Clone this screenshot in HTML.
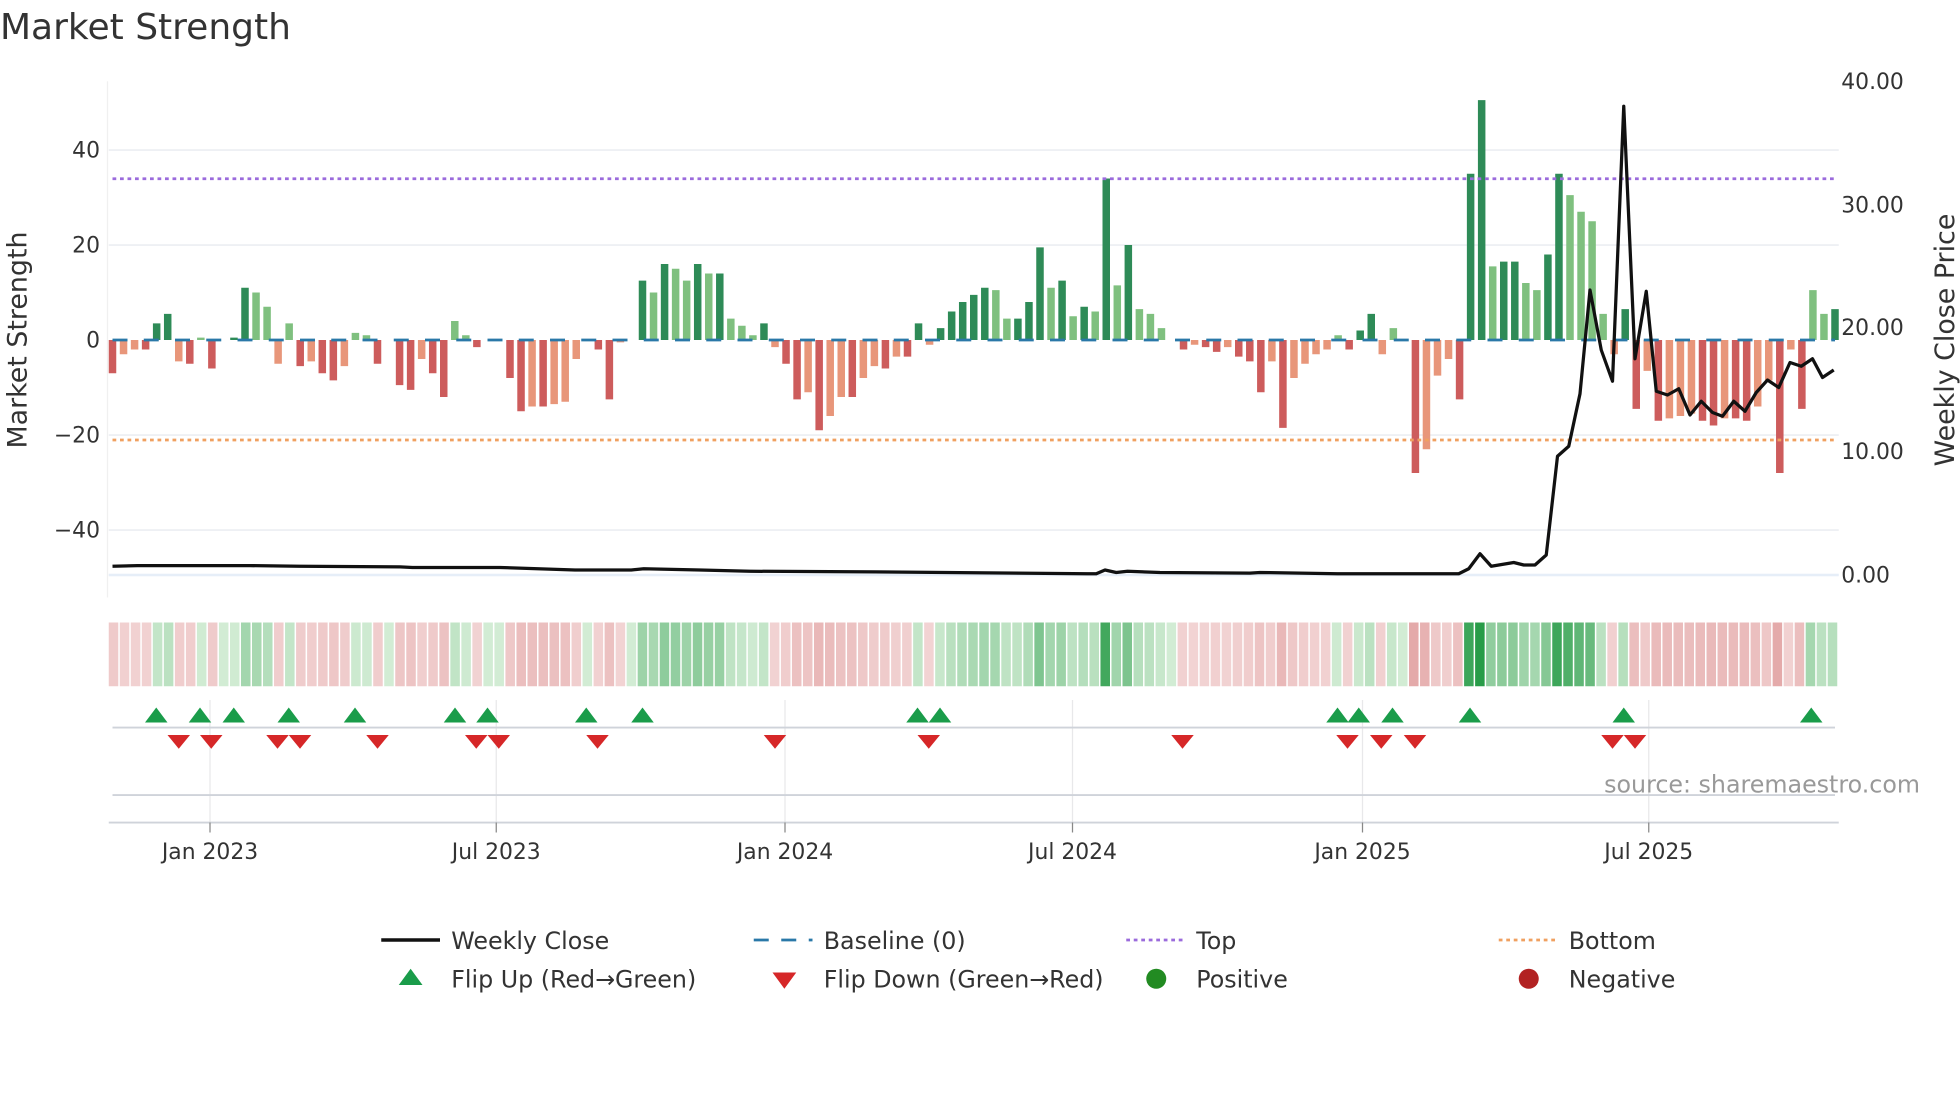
<!DOCTYPE html>
<html><head><meta charset="utf-8"><style>
html,body{margin:0;padding:0;background:#fff;width:1960px;height:1102px;overflow:hidden}
svg{display:block}
text{font-family:"DejaVu Sans","Liberation Sans",sans-serif;fill:#333}
</style></head><body>
<svg id="s" width="1960" height="1102" viewBox="0 0 1568 881.6" xmlns="http://www.w3.org/2000/svg">
<text x="0" y="31" font-size="28.8" fill="#333">Market Strength</text>
<g stroke="#eceef2" stroke-width="1.3">
<line x1="87" x2="1471" y1="120" y2="120"/><line x1="87" x2="1471" y1="196" y2="196"/>
<line x1="87" x2="1471" y1="348" y2="348"/><line x1="87" x2="1471" y1="424" y2="424"/>
</g>
<line x1="87" x2="1471" y1="460" y2="460" stroke="#e6eef8" stroke-width="2"/>
<line x1="86" x2="86" y1="65" y2="478" stroke="#f0f0f0" stroke-width="1"/>
<g font-size="17.5" text-anchor="end">
<text x="80" y="126">40</text><text x="80" y="202">20</text><text x="80" y="278">0</text>
<text x="80" y="354">−20</text><text x="80" y="430">−40</text>
</g>
<g font-size="17.5">
<text x="1473" y="71">40.00</text><text x="1473" y="170">30.00</text><text x="1473" y="268">20.00</text>
<text x="1473" y="367">10.00</text><text x="1473" y="466">0.00</text>
</g>
<text transform="translate(21,272) rotate(-90)" font-size="21.5" text-anchor="middle">Market Strength</text>
<text transform="translate(1563,272) rotate(-90)" font-size="21.5" text-anchor="middle">Weekly Close Price</text>
<g id="bars"></g>
<line x1="90" x2="1468" y1="272" y2="272" stroke="#2a78a8" stroke-width="2.2" stroke-dasharray="12,13"/>
<line x1="90" x2="1468" y1="143" y2="143" stroke="#9b6bdc" stroke-width="2.2" stroke-dasharray="3,3"/>
<line x1="90" x2="1468" y1="352" y2="352" stroke="#f0a060" stroke-width="2.2" stroke-dasharray="3,3"/>
<polyline id="price" fill="none" stroke="#111" stroke-width="2.6" stroke-linejoin="round"/>
<g id="strip"></g>
<g stroke="#e8e8ea" stroke-width="1">
<line x1="168" x2="168" y1="560" y2="660"/><line x1="397" x2="397" y1="560" y2="660"/>
<line x1="628" x2="628" y1="560" y2="660"/><line x1="858" x2="858" y1="560" y2="660"/>
<line x1="1090" x2="1090" y1="560" y2="660"/><line x1="1319" x2="1319" y1="560" y2="660"/>
</g>
<line x1="90" x2="1468" y1="582" y2="582" stroke="#cfd3da" stroke-width="1.5"/>
<line x1="90" x2="1468" y1="636" y2="636" stroke="#cfd3da" stroke-width="1.5"/>
<line x1="87" x2="1471" y1="658" y2="658" stroke="#cfd3da" stroke-width="1.5"/>
<g stroke="#888" stroke-width="1">
<line x1="168" x2="168" y1="658" y2="666"/><line x1="397" x2="397" y1="658" y2="666"/>
<line x1="628" x2="628" y1="658" y2="666"/><line x1="858" x2="858" y1="658" y2="666"/>
<line x1="1090" x2="1090" y1="658" y2="666"/><line x1="1319" x2="1319" y1="658" y2="666"/>
</g>
<g id="tri"></g>
<text x="1536" y="634" font-size="19" text-anchor="end" style="fill:#999">source: sharemaestro.com</text>
<g font-size="17.5" text-anchor="middle">
<text x="168" y="687">Jan 2023</text><text x="397" y="687">Jul 2023</text><text x="628" y="687">Jan 2024</text>
<text x="858" y="687">Jul 2024</text><text x="1090" y="687">Jan 2025</text><text x="1319" y="687">Jul 2025</text>
</g>
<g font-size="19">
<line x1="305" x2="352" y1="752" y2="752" stroke="#111" stroke-width="2.8"/>
<text x="361" y="759">Weekly Close</text>
<line x1="603" x2="650" y1="752" y2="752" stroke="#2a78a8" stroke-width="2.2" stroke-dasharray="12,10"/>
<text x="659" y="759">Baseline (0)</text>
<line x1="901" x2="948" y1="752" y2="752" stroke="#9b6bdc" stroke-width="2.2" stroke-dasharray="3,3"/>
<text x="957" y="759">Top</text>
<line x1="1199" x2="1246" y1="752" y2="752" stroke="#f0a060" stroke-width="2.2" stroke-dasharray="3,3"/>
<text x="1255" y="759">Bottom</text>
<polygon points="319,788 338,788 328.5,775" fill="#1a9c4a"/>
<text x="361" y="790">Flip Up (Red→Green)</text>
<polygon points="618,778 637,778 627.5,791" fill="#d62728"/>
<text x="659" y="790">Flip Down (Green→Red)</text>
<circle cx="925" cy="783" r="8" fill="#228b22"/>
<text x="957" y="790">Positive</text>
<circle cx="1223" cy="783" r="8" fill="#b22222"/>
<text x="1255" y="790">Negative</text>
</g>
</svg>
<script>
var V=[-7,-3,-2,-2,3.5,5.5,-4.5,-5,0.5,-6,0,0.5,11,10,7,-5,3.5,-5.5,-4.5,-7,-8.5,-5.5,1.5,1,-5,0,-9.5,-10.5,-4,-7,-12,4,1,-1.5,0,0,-8,-15,-14,-14,-13.5,-13,-4,0,-2,-12.5,-0.5,0,12.5,10,16,15,12.5,16,14,14,4.5,3,1,3.5,-1.5,-5,-12.5,-11,-19,-16,-12,-12,-8,-5.5,-6,-3.5,-3.5,3.5,-1,2.5,6,8,9.5,11,10.5,4.5,4.5,8,19.5,11,12.5,5,7,6,34,11.5,20,6.5,5.5,2.5,0,-2,-1,-1.5,-2.5,-1.5,-3.5,-4.5,-11,-4.5,-18.5,-8,-5,-3,-2,1,-2,2,5.5,-3,2.5,0,-28,-23,-7.5,-4,-12.5,35,50.5,15.5,16.5,16.5,12,10.5,18,35,30.5,27,25,5.5,-3,6.5,-14.5,-6.5,-17,-16.5,-16,-15.5,-17,-18,-16.5,-16.5,-17,-14,-8.5,-28,-2,-14.5,10.5,5.5,6.5];
var NS="http://www.w3.org/2000/svg";
function el(t,a,p){var e=document.createElementNS(NS,t);for(var k in a)e.setAttribute(k,a[k]);p.appendChild(e);return e;}
var bars=document.getElementById('bars'),strip=document.getElementById('strip');
var n=V.length,step=(1468-90)/(n-1);
for(var i=0;i<n;i++){var v=V[i],x=90+i*step,pv=i?Math.abs(V[i-1]):0,dark=Math.abs(v)>=pv;
 var c=v>=0?(dark?'#2e8b57':'#7fc07f'):(dark?'#cd5c5c':'#e8967a');
 var h=Math.abs(v)*3.8;if(h>0.3)el('rect',{x:x-3,y:v>=0?272-h:272,width:6,height:h,fill:c},bars);
 var a=Math.min(1,Math.abs(v)/40);var sc;
 if(v>=0){sc='rgb('+Math.round(210-170*a)+','+Math.round(236-80*a)+','+Math.round(212-140*a)+')';}
 else{sc='rgb('+Math.round(242-20*a)+','+Math.round(212-60*a)+','+Math.round(212-60*a)+')';}
 var sw=(1471-87)/n;el('rect',{x:87+i*sw,y:498,width:sw-1.2,height:51,fill:sc},strip);}
var P=[[90,453],[110,452.5],[200,452.5],[240,453],[320,453.5],[330,454],[400,454],[460,456],[505,456],[515,455],[560,456],[600,457],[700,457.5],[870,459],[877,459],[884,456],[893,458],[902,457],[928,458],[1000,458.5],[1008,458],[1070,459],[1167,459],[1175,455],[1184,443],[1193,453],[1211,450],[1219,452],[1228,452],[1237,444],[1246,365],[1255,357],[1264,315],[1272,232],[1281,280],[1290,305],[1299,85],[1308,287],[1317,233],[1325,313],[1334,316],[1343,311],[1352,332],[1361,321],[1370,330],[1378,333],[1387,321],[1396,329],[1405,314],[1414,304],[1423,310],[1432,290],[1441,293],[1450,287],[1458,302],[1467,296]];
document.getElementById('price').setAttribute('points',P.map(function(p){return p.join(',')}).join(' '));
var tri=document.getElementById('tri');
[125,160,187,231,284,364,390,469,514,734,752,1070,1087,1114,1176,1299,1449].forEach(function(x){el('polygon',{points:(x-9)+',578 '+(x+9)+',578 '+x+',566',fill:'#1a9c4a'},tri);});
[143,169,222,240,302,381,399,478,620,743,946,1078,1105,1132,1290,1308].forEach(function(x){el('polygon',{points:(x-9)+',588 '+(x+9)+',588 '+x+',599',fill:'#d62728'},tri);});
</script>
</body></html>
